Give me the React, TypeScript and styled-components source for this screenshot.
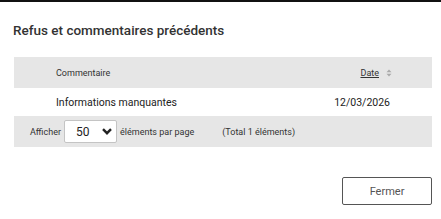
import React from "react";
import styled, { createGlobalStyle } from "styled-components";

const Global = createGlobalStyle`
  html, body { margin: 0; padding: 0; background: #fff; }
  body { font-family: Roboto, "Liberation Sans", Arial, sans-serif; color: #333; }
`;

const Dialog = styled.div`
  width: 441px;
  height: 219px;
  box-sizing: border-box;
  border-top: 2px solid #111;
  padding: 19px 9px 0 14px;
  display: flex;
  flex-direction: column;
`;

const Title = styled.h2`
  margin: 0 0 18px -1px;
  font-size: 13.5px;
  font-weight: 500;
  color: #333;
  line-height: 18px;
`;

const Table = styled.div`
  width: 418px;
  background: #e6e6e6;
  font-size: 9px;
`;

const Row = styled.div<{ $white?: boolean; $h: number }>`
  display: grid;
  grid-template-columns: 1fr 110px;
  align-items: center;
  height: ${(p) => p.$h}px;
  background: ${(p) => (p.$white ? "#fff" : "transparent")};
  padding: 0 42px 0 42px;
`;

const HeadCell = styled.div<{ $right?: boolean }>`
  font-size: 9px;
  color: #333;
  text-align: ${(p) => (p.$right ? "right" : "left")};
  margin-right: ${(p) => (p.$right ? "-2px" : "0")};
`;

const SortLink = styled.span`
  text-decoration: underline;
  margin-right: 5px;
  padding-right: 2px;
`;

const BodyCell = styled.div<{ $right?: boolean }>`
  font-size: 10.5px;
  color: #222;
  text-align: ${(p) => (p.$right ? "right" : "left")};
`;

const Footer = styled.div`
  display: flex;
  align-items: center;
  height: 31px;
  padding: 0 0 0 16px;
  font-size: 9px;
  color: #333;
`;

const Select = styled.div`
  display: flex;
  align-items: center;
  justify-content: space-between;
  width: 53px;
  height: 23px;
  box-sizing: border-box;
  background: #fff;
  border: 1px solid #c4c4c4;
  border-radius: 2px;
  margin: 0 3px 0 3px;
  padding: 0 4px 0 11px;
  font-size: 12px;
  color: #222;
`;

const Total = styled.span`
  margin-left: 28px;
`;

const Actions = styled.div`
  display: flex;
  justify-content: flex-end;
  margin-top: 30px;
`;

const Button = styled.button`
  width: 90px;
  height: 28px;
  background: #fff;
  border: 1px solid #555;
  border-radius: 2px;
  font-family: inherit;
  font-size: 11px;
  color: #555;
  padding: 0;
`;

const SortIcon = () => (
  <svg width="6" height="8" viewBox="0 0 6 8" style={{ verticalAlign: "middle" }}>
    <path d="M3 0.5 L5.5 3.2 H0.5 Z M3 7.5 L5.5 4.8 H0.5 Z" fill="#aaa" />
  </svg>
);

const Chevron = () => (
  <svg width="10" height="7" viewBox="0 0 10 7">
    <path d="M1 1.2 L5 5.2 L9 1.2" stroke="#222" strokeWidth="2.4" fill="none" />
  </svg>
);

export default function App() {
  return (
    <>
      <Global />
      <Dialog>
        <Title>Refus et commentaires précédents</Title>
        <Table>
          <Row $h={31}>
            <HeadCell>Commentaire</HeadCell>
            <HeadCell $right>
              <SortLink>Date</SortLink>
              <SortIcon />
            </HeadCell>
          </Row>
          <Row $white $h={28}>
            <BodyCell>Informations manquantes</BodyCell>
            <BodyCell $right>12/03/2026</BodyCell>
          </Row>
          <Footer>
            Afficher
            <Select>
              <span>50</span>
              <Chevron />
            </Select>
            éléments par page
            <Total>(Total 1 éléments)</Total>
          </Footer>
        </Table>
        <Actions>
          <Button>Fermer</Button>
        </Actions>
      </Dialog>
    </>
  );
}
